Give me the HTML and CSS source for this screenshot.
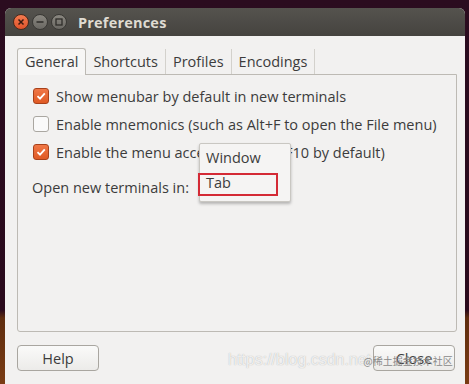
FILE: index.html
```html
<!DOCTYPE html>
<html lang="en">
<head>
    <meta charset="UTF-8">
    <title>Preferences</title>
    <link rel="stylesheet" href="styles.css">
</head>
<body>
    <div class="window">
        <div class="titlebar">
            <span class="wbtn close-btn">
                <svg width="10" height="10" viewBox="0 0 10 10"><path d="M2.5 2.5L7.5 7.5M7.5 2.5L2.5 7.5" stroke="#3b1a10" stroke-width="1.5"/></svg>
            </span>
            <span class="wbtn">
                <svg width="10" height="10" viewBox="0 0 10 10"><path d="M1.5 5H8.5" stroke="#2e2d2a" stroke-width="1.6"/></svg>
            </span>
            <span class="wbtn">
                <svg width="10" height="10" viewBox="0 0 10 10"><rect x="2" y="2" width="6" height="6" fill="none" stroke="#2e2d2a" stroke-width="1.3"/></svg>
            </span>
            <span class="title">Preferences</span>
        </div>
        <div class="content">
            <div class="tabs">
                <div class="tab active">General</div>
                <div class="tab">Shortcuts</div>
                <div class="tab">Profiles</div>
                <div class="tab">Encodings</div>
            </div>
            <div class="page">
                <label class="row">
                    <span class="check on">
                        <svg width="12" height="12" viewBox="0 0 12 12"><path d="M2.5 6.2L5 8.7L9.8 3.4" fill="none" stroke="#fff" stroke-width="1.8"/></svg>
                    </span>
                    Show menubar by default in new terminals
                </label>
                <label class="row">
                    <span class="check"></span>
                    Enable mnemonics (such as Alt+F to open the File menu)
                </label>
                <label class="row">
                    <span class="check on">
                        <svg width="12" height="12" viewBox="0 0 12 12"><path d="M2.5 6.2L5 8.7L9.8 3.4" fill="none" stroke="#fff" stroke-width="1.8"/></svg>
                    </span>
                    Enable the menu accelerator key (F10 by default)
                </label>
                <div class="row open-row">Open new terminals in:</div>

                <div class="menu">
                    <div class="item">Window</div>
                    <div class="item">Tab</div>
                </div>
                <div class="mark"></div>
            </div>
            <div class="buttons">
                <button class="btn">Help</button>
                <button class="btn">Close</button>
            </div>
            <div class="watermark">https://blog.csdn.net<span class="wm-cn">@稀土掘金技术社区</span></div>
        </div>
    </div>
</body>
</html>
```

FILE: styles.css
```css
html, body{
    margin: 0;
    height: 100%;
}
body{
    background: linear-gradient(#2b0c1f 0, #2a0a1c 310px, #5e2c0e 318px, #7a3c14 384px);
    font-family: "Open Sans", "Noto Sans", sans-serif;
    color: #3c3c3c;
    overflow: hidden;
}
.window{
    margin: 8px 4px 0 5px;
    height: 376px;
    border-radius: 6px 6px 0 0;
    background: #f2f1f0;
    overflow: hidden;
}
.titlebar{
    height: 28px;
    background: linear-gradient(#55534e, #45433f);
    display: flex;
    align-items: center;
    padding-left: 8px;
    gap: 3px;
}
.wbtn{
    width: 16px;
    height: 16px;
    border-radius: 50%;
    background: linear-gradient(#8a8780, #6a6863);
    border: 1px solid #3a3935;
    box-sizing: border-box;
    display: flex;
    align-items: center;
    justify-content: center;
}
.close-btn{
    background: linear-gradient(#f37a4f, #e0532b);
    border-color: #4a2a1c;
}
.title{
    margin-left: 8px;
    color: #dfdbd2;
    font-weight: bold;
    font-size: 14.5px;
    letter-spacing: 0.2px;
}
.content{
    padding: 13px 8px 0 12px;
    position: relative;
    height: 335px;
    box-sizing: border-box;
}
.tabs{
    display: flex;
    height: 25px;
    align-items: flex-end;
}
.tab{
    height: 25px;
    padding: 0 7px;
    font-size: 14.5px;
    line-height: 25px;
    border-right: 1px solid #d3d1cc;
    color: #3c3c3c;
}
.tab.active{
    height: 26px;
    border: 1px solid #bdbab4;
    border-bottom: none;
    border-radius: 3px 3px 0 0;
    background: #f7f6f5;
    margin-bottom: -1px;
    position: relative;
    z-index: 1;
}
.page{
    position: relative;
    height: 258px;
    border: 1px solid #bdbab4;
    border-radius: 0 0 3px 3px;
    padding: 7px 0 0 14px;
    box-sizing: border-box;
}
.row{
    display: flex;
    align-items: center;
    height: 28px;
    font-size: 14.5px;
    color: #3c3c3c;
}
.check{
    width: 16px;
    height: 16px;
    box-sizing: border-box;
    border: 1px solid #aaa7a1;
    border-radius: 3px;
    background: #fafafa;
    margin: 0 7px 0 1px;
    display: flex;
    align-items: center;
    justify-content: center;
}
.check.on{
    background: linear-gradient(#f07746, #df5a24);
    border-color: #a8411a;
}
.open-row{
    margin-top: 7px;
}
.menu{
    position: absolute;
    left: 181px;
    top: 68px;
    width: 90px;
    padding: 1px 0 6px;
    background: #f5f4f3;
    border: 1px solid #c9c7c2;
    border-radius: 2px;
    box-shadow: 0 2px 3px rgba(0, 0, 0, 0.25);
}
.item{
    height: 25px;
    line-height: 25px;
    padding-left: 6px;
    font-size: 14.5px;
    color: #3c3c3c;
}
.mark{
    position: absolute;
    left: 180px;
    top: 98px;
    width: 76px;
    height: 19px;
    border: 2px solid #d42a35;
}
.buttons{
    display: flex;
    justify-content: space-between;
    margin-top: 13px;
    padding-right: 2px;
}
.btn{
    width: 82px;
    height: 26px;
    border: 1px solid #a9a6a0;
    border-radius: 4px;
    background: linear-gradient(#fafaf9, #ecebe9);
    font-family: "Open Sans", "Noto Sans", sans-serif;
    font-size: 14.5px;
    color: #3c3c3c;
}
.watermark{
    position: absolute;
    left: 223px;
    top: 315px;
    white-space: nowrap;
    font-family: "Liberation Sans", sans-serif;
    font-size: 16px;
    color: rgba(255, 255, 255, 0.8);
    text-shadow: 0 0 1px rgba(120, 120, 120, 0.6);
}
.wm-cn{
    margin-left: -8px;
    font-family: "Noto Sans CJK SC", sans-serif;
    font-size: 10px;
    color: #8a8a8a;
    text-shadow: none;
}
```
